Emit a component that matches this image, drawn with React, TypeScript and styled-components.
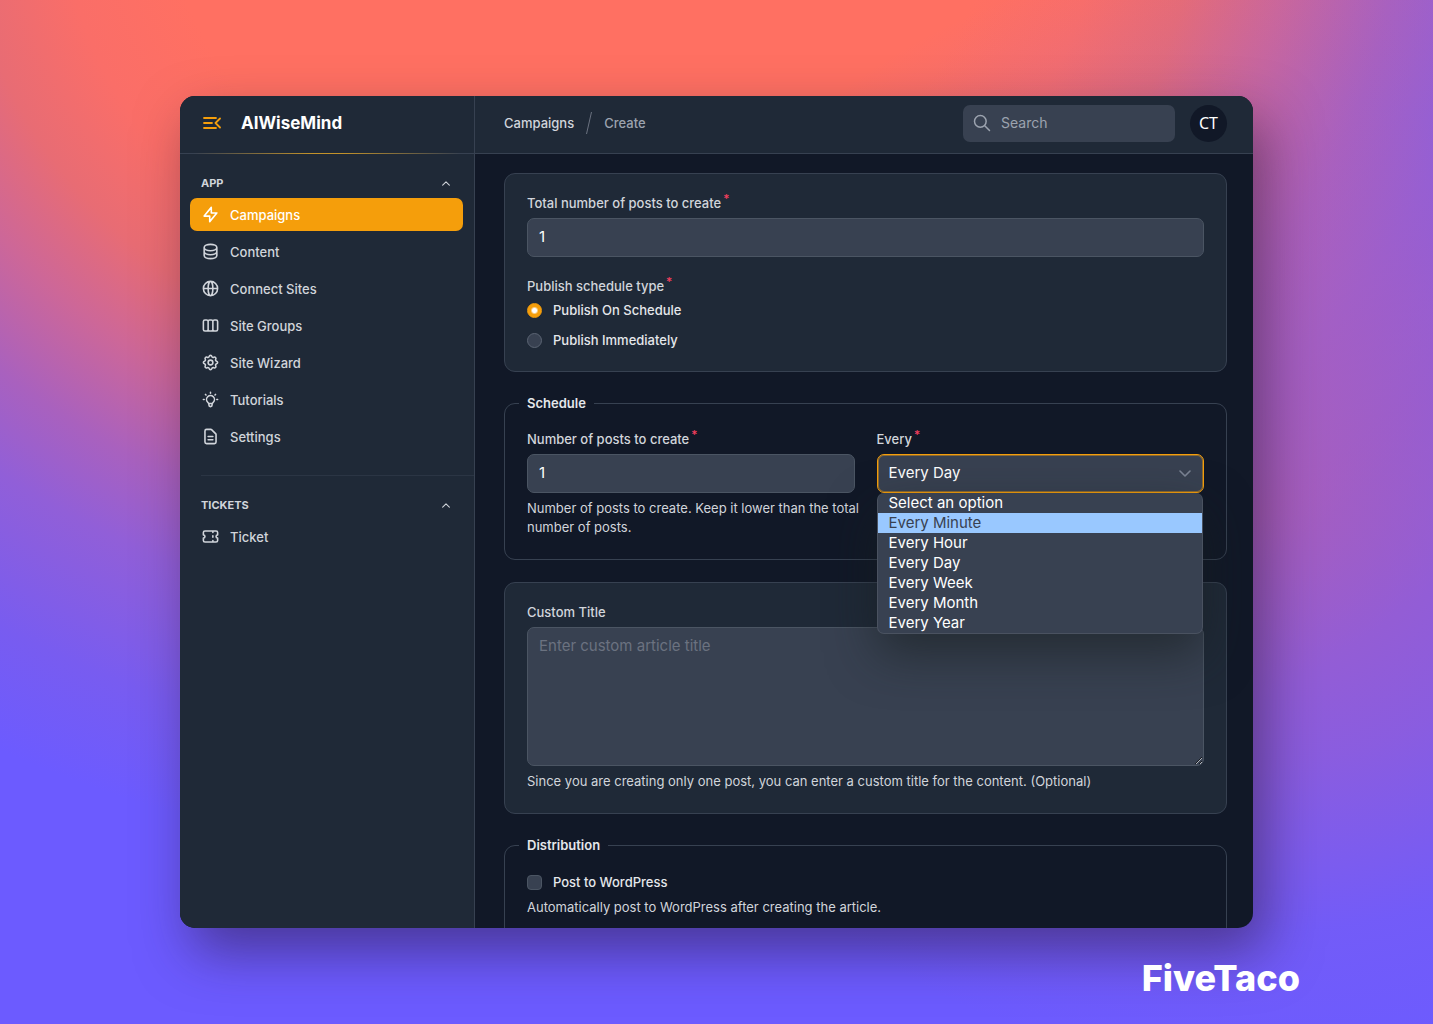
import React, { useState } from "react";
import styled, { createGlobalStyle, css } from "styled-components";
import {
  HiOutlineCog,
  HiOutlineDatabase,
  HiOutlineDocumentText,
  HiOutlineGlobeAlt,
  HiOutlineLightBulb,
  HiOutlineLightningBolt,
  HiOutlineSearch,
  HiOutlineTicket,
  HiOutlineViewBoards,
} from "react-icons/hi";

const color = {
  page: "#111827",
  panel: "#1f2937",
  field: "#384151",
  line: "#374151",
  fieldLine: "#4b5563",
  text: "#d1d5db",
  muted: "#9ca3af",
  bright: "#ffffff",
  accent: "#f59e0b",
  danger: "#f43f5e",
};

const GlobalStyle = createGlobalStyle`
  *, *::before, *::after { box-sizing: border-box; }
  body {
    margin: 0;
    font-family: Inter, "Liberation Sans", sans-serif;
    font-size: 13px;
    line-height: 18px;
    color: ${color.text};
  }
  button, input, select, textarea { font: inherit; color: inherit; }
`;

const Backdrop = styled.div`
  position: relative;
  display: flex;
  flex-direction: column;
  height: 100vh;
  padding: 96px 180px;
  background:
    radial-gradient(ellipse 640px 560px at 88% 50%, rgba(190, 95, 165, 0.66), rgba(180, 95, 180, 0.42) 45%, rgba(150, 95, 210, 0.16) 75%, rgba(130, 95, 230, 0) 100%),
    radial-gradient(
      ellipse 1200px 960px at 580px -90px,
      #ff7062 34%,
      #fa6e68 43%,
      #e86c74 51%,
      #cd6798 59%,
      #a961be 68%,
      #915fd8 76%,
      #785cf0 89%,
      #6c5bff 100%
    );
`;

const AppWindow = styled.div`
  flex: 1;
  min-height: 0;
  display: grid;
  grid-template-columns: 295px minmax(0, 1fr);
  border-radius: 15px;
  overflow: hidden;
  background: ${color.page};
  box-shadow: 12px 24px 54px rgba(40, 20, 50, 0.5);
`;

const Sidebar = styled.aside`
  background: ${color.panel};
  border-right: 1px solid ${color.line};
`;

const Brand = styled.div`
  display: flex;
  align-items: center;
  gap: 20px;
  height: 58px;
  padding: 0 22px 3px;
  border-bottom: 1px solid;
  border-image: linear-gradient(90deg, ${color.line} 5%, #c2922a 45%, #c2922a 55%, ${color.line} 95%) 1;
`;

const IconButton = styled.button`
  display: flex;
  padding: 0;
  border: 0;
  background: none;
  color: ${color.accent};
  cursor: pointer;
`;

const BrandName = styled.span`
  font-size: 17px;
  line-height: 24px;
  font-weight: 700;
  color: ${color.bright};
`;

const NavGroup = styled.section`
  padding: 14px 11px 0 10px;

  & + & {
    margin-top: 22px;
  }

  & + &::before {
    content: "";
    display: block;
    height: 1px;
    margin: -14px -11px 14px 11px;
    background: #2b3544;
  }
`;

const GroupToggle = styled.button`
  display: flex;
  align-items: center;
  justify-content: space-between;
  width: 100%;
  height: 30px;
  padding: 0 13px 0 11px;
  border: 0;
  background: none;
  font-size: 11px;
  font-weight: 700;
  color: ${color.text};
  cursor: pointer;
`;

const NavList = styled.ul`
  display: grid;
  gap: 4px;
  margin: 0;
  padding: 0;
  list-style: none;
`;

const NavLink = styled.a<{ $active?: boolean }>`
  display: flex;
  align-items: center;
  gap: 10px;
  height: 33px;
  padding: 0 11px;
  border-radius: 7px;
  font-weight: 500;
  color: ${(p) => (p.$active ? color.bright : color.text)};
  background: ${(p) => (p.$active ? color.accent : "transparent")};
  text-decoration: none;

  svg { font-size: 19px; }
`;

const Main = styled.main`
  display: flex;
  flex-direction: column;
  min-width: 0;
  min-height: 0;
  overflow: hidden;
`;

const TopBar = styled.header`
  display: flex;
  flex: none;
  align-items: center;
  justify-content: space-between;
  height: 58px;
  padding: 0 26px 3px 29px;
  background: ${color.panel};
  border-bottom: 1px solid ${color.line};
`;

const Breadcrumb = styled.nav`
  display: flex;
  align-items: center;
  gap: 11px;
  font-weight: 500;
`;

const Crumb = styled.a<{ $current?: boolean }>`
  color: ${(p) => (p.$current ? color.muted : color.text)};
  text-decoration: none;
`;

const TopActions = styled.div`
  display: flex;
  align-items: center;
  gap: 15px;
`;

const SearchBox = styled.label`
  display: flex;
  align-items: center;
  gap: 9px;
  width: 212px;
  height: 37px;
  padding: 0 9px;
  border-radius: 7px;
  background: ${color.field};
  color: ${color.muted};
`;

const SearchIcon = styled(HiOutlineSearch)`
  flex: none;
  font-size: 20px;

  path { stroke-width: 1.8; }
`;

const SearchInput = styled.input`
  min-width: 0;
  flex: 1;
  padding: 0;
  border: 0;
  outline: 0;
  background: none;
  font-size: 14px;

  &::placeholder { color: ${color.muted}; opacity: 1; }
`;

const Avatar = styled.button`
  width: 37px;
  height: 37px;
  padding: 0;
  border: 0;
  border-radius: 50%;
  background: ${color.page};
  color: ${color.bright};
  font-family: "Noto Sans", sans-serif;
  font-size: 16px;
`;

const Form = styled.form`
  display: flex;
  flex-direction: column;
  gap: 22px;
  padding: 19px 26px 22px 29px;
`;

const Card = styled.section`
  display: grid;
  flex: none;
  gap: 20px;
  padding: 20px 22px 22px;
  border: 1px solid ${color.line};
  border-radius: 11px;
  background: ${color.panel};
`;

const Fieldset = styled.fieldset`
  flex: none;
  min-width: 0;
  margin: 0;
  padding: 18px 22px 22px;
  border: 1px solid ${color.line};
  border-radius: 11px;
`;

const Legend = styled.legend`
  margin-left: -8px;
  padding: 0 8px;
  font-weight: 600;
  color: #e5e7eb;
`;

const TwoColumns = styled.div`
  display: grid;
  grid-template-columns: repeat(2, minmax(0, 1fr));
  gap: 22px;
`;

const Field = styled.div`
  display: flex;
  flex-direction: column;
  gap: 6px;
  min-width: 0;
`;

const Label = styled.label`
  font-weight: 500;
  color: ${color.text};
`;

const Star = styled.sup`
  margin-left: 2px;
  font-size: 12px;
  line-height: 0;
  color: ${color.danger};
`;

const control = css`
  width: 100%;
  border: 1px solid ${color.fieldLine};
  border-radius: 7px;
  outline: 0;
  background: ${color.field};
  color: ${color.bright};
  font-size: 15px;
  line-height: 20px;
`;

const TextInput = styled.input`
  ${control}
  height: 39px;
  padding: 0 11px 2px;
`;

const TextArea = styled.textarea`
  ${control}
  display: block;
  height: 139px;
  padding: 8px 11px;
  resize: vertical;

  &::placeholder { color: #6b7280; opacity: 1; }
`;

const Helper = styled.p`
  margin: 0;
  line-height: 19px;
  white-space: pre;
  color: ${color.text};
`;

const SelectWrap = styled.div`
  position: relative;
  display: grid;
  align-items: center;

  > * { grid-area: 1 / 1; }
  > svg { justify-self: end; margin-right: 13px; pointer-events: none; color: #7b8494; }
`;

const Select = styled.select`
  ${control}
  height: 39px;
  padding: 0 30px 2px 11px;
  border: 1px solid ${color.accent};
  box-shadow: inset 0 0 0 1px rgba(245, 158, 11, 0.45);
  appearance: none;
`;

const OptionList = styled.ul`
  position: absolute;
  z-index: 2;
  top: 100%;
  left: 0;
  right: 1px;
  margin: 0;
  padding: 0;
  overflow: hidden;
  list-style: none;
  border: 1px solid #4a5260;
  border-top: 0;
  border-radius: 7px;
  background: ${color.field};
  color: ${color.bright};
  font-size: 15px;
  line-height: 20px;
  box-shadow: 0 20px 48px rgba(24, 30, 32, 0.6);
`;

const Option = styled.li<{ $highlighted?: boolean }>`
  padding: 0 11px;
  cursor: default;
  ${(p) => p.$highlighted && `background: #99c8ff; color: ${color.field};`}
`;

const RadioList = styled.div`
  display: grid;
  gap: 12px;
`;

const OptionRow = styled.label<{ $tall?: boolean }>`
  display: flex;
  align-items: center;
  gap: 11px;
  height: ${(p) => (p.$tall ? 20 : 18)}px;
  font-weight: 500;
  color: #e5e7eb;
`;

const Radio = styled.input`
  appearance: none;
  flex: none;
  width: 15px;
  height: 15px;
  margin: 0;
  border: 1px solid #5b6473;
  border-radius: 50%;
  background: ${color.field};

  &:checked {
    border-color: ${color.accent};
    background: radial-gradient(circle, #fff 2px, ${color.accent} 4px);
  }
`;

const Checkbox = styled.input`
  appearance: none;
  flex: none;
  width: 15px;
  height: 15px;
  margin: 0;
  border: 1px solid ${color.fieldLine};
  border-radius: 4px;
  background: ${color.field};

  &:checked { background: ${color.accent}; }
`;

const Watermark = styled.span`
  position: absolute;
  right: 133px;
  bottom: 24px;
  font-size: 36px;
  line-height: 44px;
  font-weight: 800;
  color: ${color.bright};
`;

const Chevron = ({ up, width }: { up?: boolean; width: number }) => (
  <svg width={width} height={width / 2 + 1} viewBox="0 0 12 7" fill="none" stroke="currentColor" strokeWidth="1.6" strokeLinecap="round" strokeLinejoin="round" aria-hidden>
    <path d={up ? "M1 6l5-5 5 5" : "M1 1l5 5 5-5"} />
  </svg>
);

const CollapseIcon = () => (
  <svg width="19" height="14" viewBox="0 0 19 14" fill="none" stroke="currentColor" strokeWidth="1.8" strokeLinecap="round" strokeLinejoin="round" aria-hidden>
    <path d="M2 2h12M2 7h8M2 12h12M18 2.5L13.5 7l4.500 4.500" />
  </svg>
);

const Slash = () => (
  <svg width="8" height="24" viewBox="0 0 8 24" stroke="#6b7280" strokeWidth="1" aria-hidden>
    <path d="M1.500 23L6.500 1" />
  </svg>
);

const groups = [
  {
    title: "APP",
    items: [
      { name: "Campaigns", Icon: HiOutlineLightningBolt, active: true },
      { name: "Content", Icon: HiOutlineDatabase },
      { name: "Connect Sites", Icon: HiOutlineGlobeAlt },
      { name: "Site Groups", Icon: HiOutlineViewBoards },
      { name: "Site Wizard", Icon: HiOutlineCog },
      { name: "Tutorials", Icon: HiOutlineLightBulb },
      { name: "Settings", Icon: HiOutlineDocumentText },
    ],
  },
  { title: "TICKETS", items: [{ name: "Ticket", Icon: HiOutlineTicket }] },
] as { title: string; items: { name: string; Icon: React.ComponentType; active?: boolean }[] }[];

const intervals = ["Select an option", "Every Minute", "Every Hour", "Every Day", "Every Week", "Every Month", "Every Year"];

const schedules = ["Publish On Schedule", "Publish Immediately"];

export default function App() {
  const [interval, setInterval] = useState("Every Day");
  const [highlighted, setHighlighted] = useState("Every Minute");

  return (
    <>
      <GlobalStyle />
      <Backdrop>
        <AppWindow>
          <Sidebar>
            <Brand>
              <IconButton type="button" aria-label="Collapse sidebar">
                <CollapseIcon />
              </IconButton>
              <BrandName>AIWiseMind</BrandName>
            </Brand>
            <nav>
              {groups.map((group) => (
                <NavGroup key={group.title}>
                  <GroupToggle type="button">
                    {group.title}
                    <Chevron up width={8} />
                  </GroupToggle>
                  <NavList>
                    {group.items.map(({ name, Icon, active }) => (
                      <li key={name}>
                        <NavLink href="#" $active={active}>
                          <Icon />
                          {name}
                        </NavLink>
                      </li>
                    ))}
                  </NavList>
                </NavGroup>
              ))}
            </nav>
          </Sidebar>

          <Main>
            <TopBar>
              <Breadcrumb>
                <Crumb href="#">Campaigns</Crumb>
                <Slash />
                <Crumb href="#" $current>Create</Crumb>
              </Breadcrumb>
              <TopActions>
                <SearchBox>
                  <SearchIcon />
                  <SearchInput type="search" placeholder="Search" aria-label="Search" />
                </SearchBox>
                <Avatar type="button">CT</Avatar>
              </TopActions>
            </TopBar>

            <Form>
              <Card>
                <Field>
                  <Label htmlFor="total">Total number of posts to create<Star>*</Star></Label>
                  <TextInput id="total" defaultValue="1" />
                </Field>
                <Field role="radiogroup" aria-labelledby="schedule-type">
                  <Label as="span" id="schedule-type">Publish schedule type<Star>*</Star></Label>
                  <RadioList>
                    {schedules.map((name, i) => (
                      <OptionRow key={name}>
                        <Radio type="radio" name="schedule" defaultChecked={i === 0} />
                        {name}
                      </OptionRow>
                    ))}
                  </RadioList>
                </Field>
              </Card>

              <Fieldset>
                <Legend>Schedule</Legend>
                <TwoColumns>
                  <Field>
                    <Label htmlFor="count">Number of posts to create<Star>*</Star></Label>
                    <TextInput id="count" defaultValue="1" />
                    <Helper>{"Number of posts to create. Keep it lower than the total\nnumber of posts."}</Helper>
                  </Field>
                  <Field>
                    <Label htmlFor="every">Every<Star>*</Star></Label>
                    <SelectWrap>
                      <Select id="every" value={interval} onChange={(e) => setInterval(e.target.value)}>
                        {intervals.map((name) => <option key={name}>{name}</option>)}
                      </Select>
                      <Chevron width={12} />
                      <OptionList role="listbox" aria-label="Every">
                        {intervals.map((name) => (
                          <Option
                            key={name}
                            role="option"
                            aria-selected={name === interval}
                            $highlighted={name === highlighted}
                            onMouseEnter={() => setHighlighted(name)}
                            onClick={() => setInterval(name)}
                          >
                            {name}
                          </Option>
                        ))}
                      </OptionList>
                    </SelectWrap>
                  </Field>
                </TwoColumns>
              </Fieldset>

              <Card>
                <Field>
                  <Label htmlFor="title">Custom Title</Label>
                  <TextArea id="title" placeholder="Enter custom article title" />
                  <Helper>Since you are creating only one post, you can enter a custom title for the content. (Optional)</Helper>
                </Field>
              </Card>

              <Fieldset>
                <Legend>Distribution</Legend>
                <Field>
                  <OptionRow $tall>
                    <Checkbox type="checkbox" />
                    Post to WordPress
                  </OptionRow>
                  <Helper>Automatically post to WordPress after creating the article.</Helper>
                </Field>
              </Fieldset>
            </Form>
          </Main>
        </AppWindow>
        <Watermark>FiveTaco</Watermark>
      </Backdrop>
    </>
  );
}
